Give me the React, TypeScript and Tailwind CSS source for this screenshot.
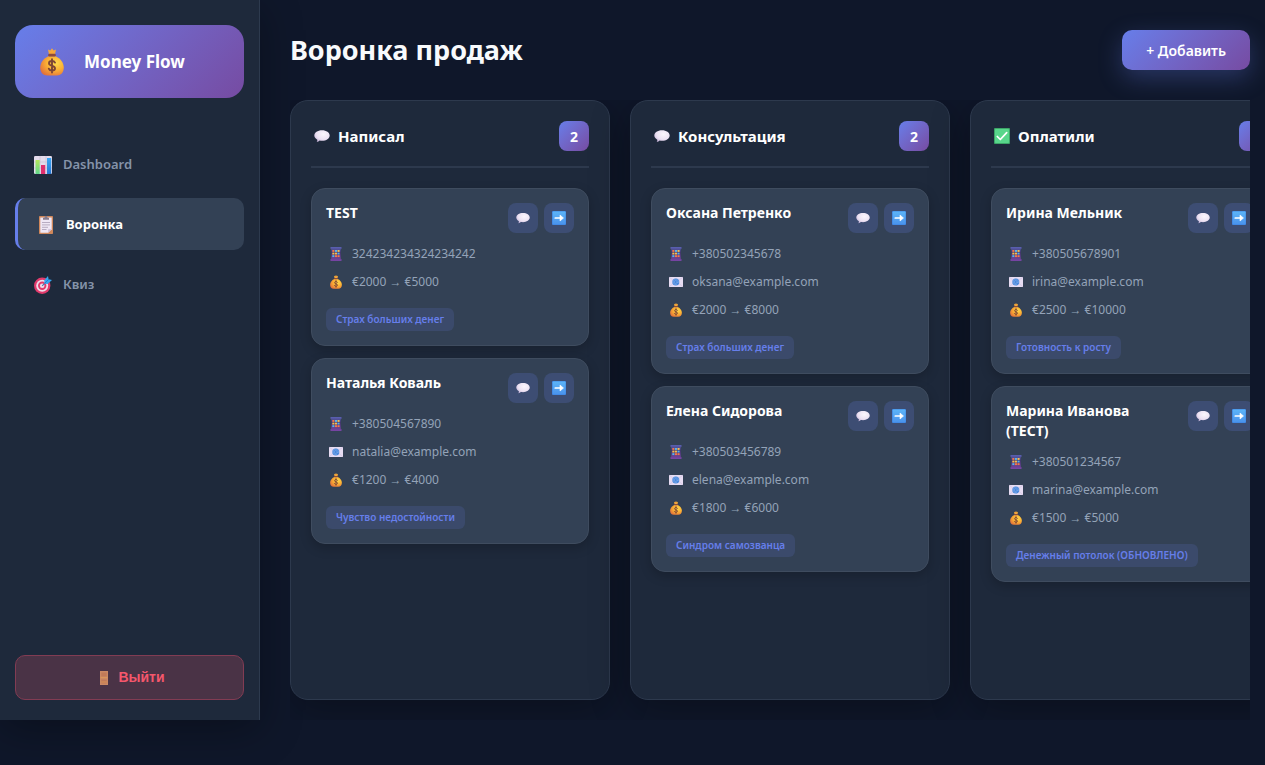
import React from "react";

type IconProps = { className?: string };

type Lead = {
  name: string;
  phone: string;
  email?: string;
  from: number;
  to: number;
  tag: string;
};

type Stage = { title: string; icon: React.ReactNode; leads: Lead[] };

/* Gradients shared by every icon on the page */
function IconDefs() {
  return (
    <svg className="absolute size-0" aria-hidden="true">
      <defs>
        <radialGradient id="gold" cx="0.65" cy="0.35" r="0.75">
          <stop offset="0" stopColor="#ffdb4d" />
          <stop offset="0.5" stopColor="#fbb034" />
          <stop offset="1" stopColor="#e2703a" />
        </radialGradient>
        <radialGradient id="bubble" cx="0.6" cy="0.35" r="0.75">
          <stop offset="0" stopColor="#fbf7fd" />
          <stop offset="0.6" stopColor="#ece2f3" />
          <stop offset="1" stopColor="#c3afd6" />
        </radialGradient>
        <linearGradient id="green" x1="0" y1="0" x2="0" y2="1">
          <stop offset="0" stopColor="#b4e85c" />
          <stop offset="1" stopColor="#5fd68a" />
        </linearGradient>
        <linearGradient id="blue" x1="0" y1="0" x2="0" y2="1">
          <stop offset="0" stopColor="#3aa8f5" />
          <stop offset="1" stopColor="#2577d3" />
        </linearGradient>
        <linearGradient id="arrow" x1="0" y1="0" x2="0" y2="1">
          <stop offset="0" stopColor="#5cb4f8" />
          <stop offset="1" stopColor="#4a93ec" />
        </linearGradient>
        <linearGradient id="phone" x1="0" y1="0" x2="0" y2="1">
          <stop offset="0" stopColor="#5a62b4" />
          <stop offset="0.4" stopColor="#44356e" />
          <stop offset="1" stopColor="#7a45a6" />
        </linearGradient>
      </defs>
    </svg>
  );
}

function MoneyBag({ className }: IconProps) {
  return (
    <svg viewBox="0 0 28 28" className={className} aria-hidden="true">
      <path d="M10 1.6 12.3 2.6 14 .2 15.7 2.6 18 1.6 17 6.5H11Z" fill="#f6a83a" />
      <path d="M10.4 8.2C5.5 10.4 2.2 15 2.2 19.6c0 5 3 8 7 8h9.6c4 0 7-3 7-8 0-4.600-3.300-9.200-8.200-11.400Z" fill="url(#gold)" />
      <rect x="10.200" y="5.800" width="7.600" height="2.600" rx="1.200" fill="#8c4a3c" />
      <path d="M17 14.600c-.6-1.200-1.700-1.600-3-1.600-1.800 0-3 .9-3 2.300 0 3.400 6 1.700 6 5 0 1.500-1.300 2.300-3 2.300-1.500 0-2.700-.6-3.200-1.900M14 11.300v13.200" fill="none" stroke="#7d4535" strokeWidth="1.900" strokeLinecap="round" />
    </svg>
  );
}

function ChatBubble({ className }: IconProps) {
  return (
    <svg viewBox="0 0 16 16" className={className} aria-hidden="true">
      <path d="M8 2.200c4.400 0 7.700 2.300 7.700 5.300S12.400 12.800 8 12.800c-.8 0-1.600-.1-2.400-.2-.7.8-1.700 1.300-2.900 1.300.5-.7.7-1.400.6-2.200C1.500 10.700.3 9.200.3 7.500.3 4.500 3.600 2.200 8 2.200Z" fill="url(#bubble)" />
    </svg>
  );
}

function ArrowTile({ className }: IconProps) {
  return (
    <svg viewBox="0 0 14 14" className={className} aria-hidden="true">
      <rect width="14" height="14" rx="1" fill="#3f87e4" />
      <rect x=".8" y=".5" width="12.700" height="12.700" rx=".8" fill="url(#arrow)" />
      <path d="M3.300 7H9.500" stroke="#fff" strokeWidth="1.700" strokeLinecap="round" />
      <path d="M8 4 11.500 7 8 10Z" fill="#fff" stroke="#fff" strokeWidth=".6" strokeLinejoin="round" />
    </svg>
  );
}

function CheckTile({ className }: IconProps) {
  return (
    <svg viewBox="0 0 16 16" className={className} aria-hidden="true">
      <rect width="16" height="16" rx="1" fill="#3da567" />
      <rect x="1" y="1" width="14" height="14" rx=".8" fill="#58d68b" />
      <path d="m3.300 8.500 3 3 6.400-6.800" fill="none" stroke="#fff" strokeWidth="1.700" strokeLinecap="round" strokeLinejoin="round" />
    </svg>
  );
}

function PhoneIcon({ className }: IconProps) {
  const keys = ["#f2784b", "#55b4f0", "#f7bf4f", "#f7bf4f", "#55b4f0", "#f2784b"];
  return (
    <svg viewBox="0 0 14 14" className={className} aria-hidden="true">
      <path d="M1.500 0h11v2h-.7v10h.7v2h-11v-2h.7V2h-.7Z" fill="url(#phone)" />
      {[0, 1, 2].map((row) =>
        [0, 1, 2].map((col) => (
          <rect key={`${row}-${col}`} x={3.300 + col * 2.600} y={3 + row * 2.600} width="2.100" height="1.900" fill={keys[(row * 2 + col) % 6]} />
        )),
      )}
    </svg>
  );
}

function MailIcon({ className }: IconProps) {
  return (
    <svg viewBox="0 0 14 14" className={className} aria-hidden="true">
      <rect y="2" width="14" height="10" rx=".5" fill="#e6dcf2" />
      <path d="m0 12 5-4.500M14 12 9 7.500M0 2l5 4M14 2 9 6" stroke="#c9b8dd" strokeWidth=".5" />
      <circle cx="6.800" cy="7" r="3.500" fill="#4687dc" />
      <path d="M8.200 7a1.500 1.500 0 1 0-1.500 1.500c.8 0 1.300-.5 1.500-1.500 0 1.200 1.300 1.300 1.300 0A2.700 2.700 0 1 0 8 9.300" fill="none" stroke="#8fb6ec" strokeWidth=".5" />
    </svg>
  );
}

function ChartIcon({ className }: IconProps) {
  return (
    <svg viewBox="0 0 18 18" className={className} aria-hidden="true">
      <rect width="18" height="18" rx="1.200" fill="#e4dcec" />
      <path d="M0 6H18M0 12H18M6 0V18M12 0V18" stroke="#c2b6cd" strokeWidth=".5" />
      <rect x="1.500" y="4" width="4.200" height="14" fill="url(#green)" />
      <rect x="7" y="9" width="4.200" height="9" fill="#e02e6d" />
      <rect x="13" y="2" width="4.200" height="16" fill="url(#blue)" />
    </svg>
  );
}

function ClipboardIcon({ className }: IconProps) {
  return (
    <svg viewBox="0 0 18 18" className={className} aria-hidden="true">
      <rect x="2" width="14" height="18" rx=".8" fill="#cf875b" />
      <path d="M3.300 1.500h11.400v11.700l-3.500 3.500H3.300Z" fill="#efe7f5" />
      <path d="M14.700 13.200h-3.500v3.500Z" fill="#cdbcd9" />
      <path d="M6 3.700V1.800h1.400C7.600.5 8.200 0 9 0s1.400.5 1.600 1.800H12v1.900Z" fill="#857b8c" />
      <path d="M5 6.500h8M5 8.900h8M5 11.300h6M5 13.500h4.500" stroke="#a99db5" strokeWidth=".8" />
    </svg>
  );
}

function TargetIcon({ className }: IconProps) {
  return (
    <svg viewBox="0 0 18 18" className={className} aria-hidden="true">
      <circle cx="8.200" cy="9.800" r="8.200" fill="#e23a6c" />
      <circle cx="8.200" cy="9.800" r="6" fill="#efdcea" />
      <circle cx="8.200" cy="9.800" r="4.200" fill="#e23a6c" />
      <circle cx="8.200" cy="9.800" r="2.300" fill="#efdcea" />
      <path d="m8.200 9.800 5-5" stroke="#4576ad" strokeWidth="1.100" />
      <path d="M10.500 7.700 10.300 4.300 14 0l.6 3.300 3.400.6-4.300 4Z" fill="#35a5ee" />
      <path d="m11 7 4-4" stroke="#1b6fc0" strokeWidth=".7" />
    </svg>
  );
}

function DoorIcon({ className }: IconProps) {
  return (
    <svg viewBox="0 0 8 14" className={className} aria-hidden="true">
      <rect width="8" height="14" fill="#cb8964" />
      <path d="M1.300 1.500h5.400v4H1.300ZM1.300 8.500h5.400v4H1.300Z" fill="#c17a58" />
      <path d="M.5 6.600h7M1.300 11h5.400" stroke="#e09a58" strokeWidth=".8" />
    </svg>
  );
}

const stages: Stage[] = [
  {
    title: "Написал",
    icon: <ChatBubble className="size-4" />,
    leads: [
      { name: "TEST", phone: "324234234324234242", from: 2000, to: 5000, tag: "Страх больших денег" },
      { name: "Наталья Коваль", phone: "+380504567890", email: "natalia@example.com", from: 1200, to: 4000, tag: "Чувство недостойности" },
    ],
  },
  {
    title: "Консультация",
    icon: <ChatBubble className="size-4" />,
    leads: [
      { name: "Оксана Петренко", phone: "+380502345678", email: "oksana@example.com", from: 2000, to: 8000, tag: "Страх больших денег" },
      { name: "Елена Сидорова", phone: "+380503456789", email: "elena@example.com", from: 1800, to: 6000, tag: "Синдром самозванца" },
    ],
  },
  {
    title: "Оплатили",
    icon: <CheckTile className="size-4" />,
    leads: [
      { name: "Ирина Мельник", phone: "+380505678901", email: "irina@example.com", from: 2500, to: 10000, tag: "Готовность к росту" },
      { name: "Марина Иванова (ТЕСТ)", phone: "+380501234567", email: "marina@example.com", from: 1500, to: 5000, tag: "Денежный потолок (ОБНОВЛЕНО)" },
    ],
  },
];

const navItems = [
  { label: "Dashboard", icon: <ChartIcon className="size-[18px]" />, active: false },
  { label: "Воронка", icon: <ClipboardIcon className="size-[18px]" />, active: true },
  { label: "Квиз", icon: <TargetIcon className="size-[18px]" />, active: false },
];

function Sidebar() {
  return (
    <aside className="flex w-[260px] shrink-0 flex-col border-r border-[#2d3a4e] bg-[#1e293b] px-[15px] pt-[25px] pb-5 shadow-[0_10px_40px_rgba(0,0,0,0.3)]">
      <div className="flex h-[73px] items-center gap-[18px] rounded-[18px] bg-linear-135 from-[#667eea] to-[#764ba2] px-[23px]">
        <MoneyBag className="size-7" />
        <span className="text-[17px] font-bold text-white">Money Flow</span>
      </div>
      <nav className="mt-10 flex flex-col gap-2">
        {navItems.map((item) => (
          <a
            key={item.label}
            href="#"
            aria-current={item.active ? "page" : undefined}
            className={
              item.active
                ? "flex h-[52px] items-center gap-2.5 rounded-[10px] border-l-3 border-[#667eea] bg-[#334155] px-[18px] pt-0.5 text-[13px] font-bold text-white"
                : "flex h-[52px] items-center gap-2.5 rounded-[10px] px-[18px] pt-0.5 text-[13px] font-semibold text-[#8593a9]"
            }
          >
            <span className="flex w-5 justify-center">{item.icon}</span>
            {item.label}
          </a>
        ))}
      </nav>
      <button
        type="button"
        className="mt-auto flex h-[45px] items-center justify-center gap-1 rounded-[10px] border border-[#823c53] bg-[#4a3346] font-['Liberation_Sans',Arial,sans-serif] text-[14px] font-bold text-[#f5576c]"
      >
        <span className="flex w-5 justify-center">
          <DoorIcon className="h-3.5 w-2" />
        </span>
        Выйти
      </button>
    </aside>
  );
}

function DetailRow({ icon, children }: { icon: React.ReactNode; children: React.ReactNode }) {
  return (
    <li className="flex items-center gap-1.5 text-[12px] leading-[18px] text-[#94a3b8]">
      <span className="flex w-5 shrink-0 justify-center">{icon}</span>
      <span>{children}</span>
    </li>
  );
}

function LeadCard({ lead }: { lead: Lead }) {
  return (
    <article className="rounded-[14px] border border-[#3f4c5f] bg-[#334155] p-3.5 shadow-[0_4px_12px_rgba(0,0,0,0.2)]">
      <div className="mb-3 flex items-start justify-between gap-4">
        <h3 className="text-[14px] leading-5 font-bold text-white">{lead.name}</h3>
        <div className="flex shrink-0 gap-1.5">
          <button type="button" aria-label="Написать" className="flex size-[30px] items-center justify-center rounded-lg bg-[#3d4d73]">
            <ChatBubble className="size-3.5" />
          </button>
          <button type="button" aria-label="Следующий этап" className="flex size-[30px] items-center justify-center rounded-lg bg-[#3d4d73]">
            <ArrowTile className="size-3.5" />
          </button>
        </div>
      </div>
      <ul className="flex flex-col gap-2.5">
        <DetailRow icon={<PhoneIcon className="size-3.5" />}>{lead.phone}</DetailRow>
        {lead.email && <DetailRow icon={<MailIcon className="size-3.5" />}>{lead.email}</DetailRow>}
        <DetailRow icon={<MoneyBag className="size-3.5" />}>
          €{lead.from} → €{lead.to}
        </DetailRow>
      </ul>
      <span className="mt-[17px] block w-fit rounded-md bg-[#3b4a6b] px-2.5 text-[10px] leading-[23px] font-semibold text-[#667eea]">
        {lead.tag}
      </span>
    </article>
  );
}

function StageColumn({ stage }: { stage: Stage }) {
  return (
    <section className="w-80 shrink-0 rounded-[18px] border border-[#2d394d] bg-[#1e293b] p-5 shadow-[0_10px_40px_rgba(0,0,0,0.3)]">
      <header className="mb-5 flex items-center justify-between border-b-2 border-[#2d394d] pb-[15px]">
        <h2 className="flex items-center gap-2 pl-[3px] text-[15px] font-bold text-white">
          {stage.icon}
          {stage.title}
        </h2>
        <span className="flex size-[30px] items-center justify-center rounded-lg bg-linear-135 from-[#667eea] to-[#764ba2] text-[14px] font-bold text-white">
          {stage.leads.length}
        </span>
      </header>
      <div className="flex flex-col gap-3">
        {stage.leads.map((lead) => (
          <LeadCard key={lead.name} lead={lead} />
        ))}
      </div>
    </section>
  );
}

export default function App() {
  return (
    <div className="flex min-h-screen bg-[#0f172a] pb-[45px] font-['Noto_Sans','Open_Sans',sans-serif]">
      <IconDefs />
      <Sidebar />
      <main className="flex min-w-0 flex-1 flex-col pt-[30px] pr-[15px] pl-[30px]">
        <header className="mb-[30px] flex items-center justify-between">
          <h1 className="text-[27px] leading-10 font-bold text-[#f8fafc]">Воронка продаж</h1>
          <button
            type="button"
            className="h-10 rounded-[10px] bg-linear-135 from-[#667eea] to-[#764ba2] px-6 text-[14px] font-semibold text-white shadow-[0_8px_24px_rgba(102,126,234,0.3)]"
          >
            + Добавить
          </button>
        </header>
        <div className="flex flex-1 gap-5 overflow-x-auto pb-5 [scrollbar-width:none]">
          {stages.map((stage) => (
            <StageColumn key={stage.title} stage={stage} />
          ))}
        </div>
      </main>
    </div>
  );
}
